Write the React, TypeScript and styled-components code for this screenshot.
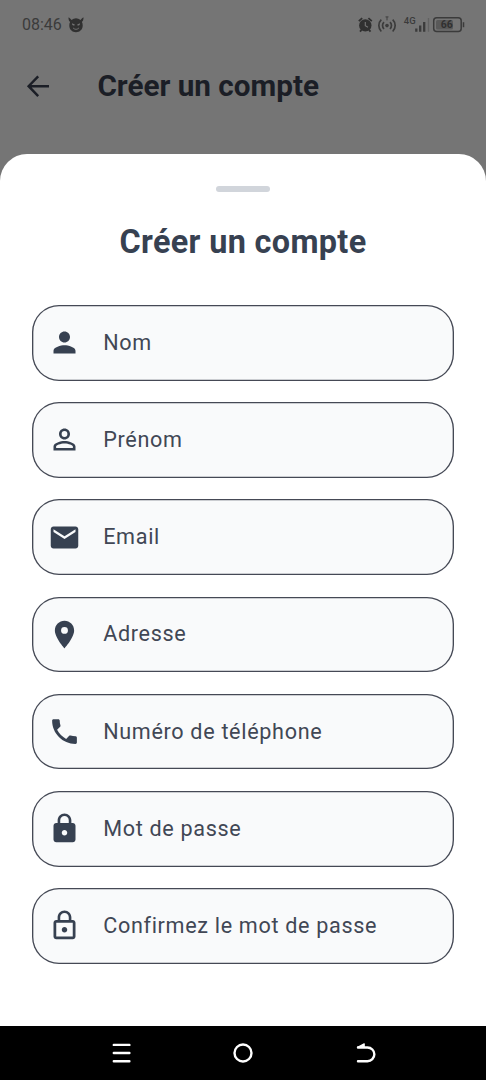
import React from "react";
import styled, { createGlobalStyle } from "styled-components";
import {
  MdEmail,
  MdLocationOn,
  MdLock,
  MdLockOutline,
  MdPerson,
  MdPersonOutline,
  MdPhone,
} from "react-icons/md";
import type { IconType } from "react-icons";

const GlobalStyle = createGlobalStyle`
  * { box-sizing: border-box; }
  body { margin: 0; background: #757575; font-family: Roboto, sans-serif; }
`;

const Screen = styled.main`
  display: flex;
  flex-direction: column;
  width: 486px;
  height: 1080px;
  overflow: hidden;
  background: #757575;
`;

const StatusBar = styled.header`
  display: flex;
  align-items: center;
  justify-content: space-between;
  height: 49px;
  padding: 0 21px 0 22px;
  color: #3b3b3b;
`;

const StatusGroup = styled.div`
  display: flex;
  align-items: center;
`;

const Clock = styled.span`
  margin-right: 6px;
  font-size: 16px;
  line-height: 20px;
`;

const AppBar = styled.div`
  display: flex;
  align-items: center;
  flex: none;
  height: 75px;
  padding-left: 22px;
  color: #1b1e26;
`;

const AppBarTitle = styled.h1`
  margin: 0 0 2px 43px;
  font-size: 29.7px;
  line-height: 38px;
  font-weight: 700;
`;

const Sheet = styled.section`
  display: flex;
  flex-direction: column;
  flex: 1;
  margin-top: 30px;
  padding: 32px 32.4px 0;
  border-radius: 27px 27px 0 0;
  background: #fff;
`;

const Handle = styled.div`
  align-self: center;
  flex: none;
  width: 54px;
  height: 6px;
  border-radius: 3px;
  background: #d1d5db;
`;

const SheetTitle = styled.h2`
  margin: 31px 0 43px;
  font-size: 32.4px;
  line-height: 39px;
  font-weight: 700;
  letter-spacing: 0.34px;
  text-align: center;
  color: #374151;
`;

const Form = styled.form`
  display: flex;
  flex-direction: column;
  gap: 21.6px;
`;

const Field = styled.label`
  display: flex;
  align-items: center;
  height: 75.6px;
  padding-left: 16.1px;
  border-radius: 27px;
  background: #f9fafb;
  box-shadow: inset 0 0 0 1.35px #454955;
  color: #374151;
  font-size: 21.6px;
  letter-spacing: 0.675px;
`;

const FieldLabel = styled.span`
  margin-left: 21.7px;
  line-height: 26px;
  color: #414755;
`;

const NavBar = styled.nav`
  display: flex;
  align-items: center;
  justify-content: space-around;
  flex: none;
  height: 54px;
  padding: 0 60.5px;
  background: #000;
`;

const fields: { label: string; icon: IconType }[] = [
  { label: "Nom", icon: MdPerson },
  { label: "Prénom", icon: MdPersonOutline },
  { label: "Email", icon: MdEmail },
  { label: "Adresse", icon: MdLocationOn },
  { label: "Numéro de téléphone", icon: MdPhone },
  { label: "Mot de passe", icon: MdLock },
  { label: "Confirmez le mot de passe", icon: MdLockOutline },
];

const MascotIcon = () => (
  <svg width="16" height="16" viewBox="0 0 16 16">
    <path d="M.4.6c.1 2.400.8 3.800 1.700 4.500A7 7 0 0 0 1.300 8.500C1.300 12.500 4.300 15.200 8 15.200s6.700-2.700 6.700-6.700a7 7 0 0 0-.8-3.400C14.800 4.400 15.500 3 15.600.6c-1.200.3-2.500 1.400-3 2.500a7.500 7.500 0 0 0-9.200 0C2.900 2 1.600.9.400.6z" fill="#303030" />
    <path d="M4 6.200 6.800 7.500 6.200 8.800 4.300 8zM12 6.200 9.200 7.500l.6 1.300 1.900-.8z" fill="#757575" />
    <path d="M5 10.800c1.700 2 4.300 2 6 0" fill="none" stroke="#757575" strokeWidth="1" />
  </svg>
);

const StatusIcons = () => (
  <svg width="108" height="22" viewBox="0 0.600 108 22" fill="none" stroke="#3b3b3b">
    <circle cx="8.300" cy="12" r="6.200" fill="#303030" stroke="none" />
    <path d="M1.800 7.800 5.200 4.700M11.400 4.700l3.400 3.100M4.500 16.500 3 18.300M12 16.500l1.500 1.800" stroke="#303030" strokeWidth="1.800" />
    <path d="M8.300 8.500v3.800l2.700 1.600" stroke="#757575" strokeWidth="1.100" />
    <circle cx="30" cy="12.200" r="1.800" fill="#3b3b3b" stroke="none" />
    <path d="M27 8.800a4.700 4.700 0 0 0 0 6.800M33 8.800a4.700 4.700 0 0 1 0 6.800M24.300 6.300a8.300 8.300 0 0 0 0 11.800M35.700 6.300a8.300 8.300 0 0 1 0 11.800" strokeWidth="1.700" />
    <path d="M28.500 3.500h3M30 3.500V7" strokeWidth="0.900" />
    <text x="46.800" y="11" fontSize="9.500" fontWeight="500" fill="#3b3b3b" stroke="none" fontFamily="Roboto, sans-serif">4G</text>
    <path d="M59.300 15v3.400M63.200 12v6.400M67.200 8.500v9.900" strokeWidth="2.300" />
    <path d="M71.500 4.600v13.800" stroke="#626262" strokeWidth="1.300" />
    <rect x="76.700" y="4.400" width="27.500" height="13.800" rx="3" strokeWidth="1.500" />
    <path d="M106.500 8.800v5" strokeWidth="1.500" />
    <rect x="79" y="6.600" width="17" height="9.400" rx="1.500" fill="#595959" stroke="none" />
    <text x="83.700" y="15.100" fontSize="10.500" fontWeight="700" fill="#303030" stroke="none" fontFamily="Roboto, sans-serif">66</text>
  </svg>
);

const BackArrow = () => (
  <svg width="32.400" height="32.400" viewBox="0 0 24 24" fill="none" stroke="currentColor" strokeWidth="1.800">
    <path d="M20 12H5.200M12 4.700 4.900 12 12 19.300" />
  </svg>
);

const NavIcon = styled.svg`
  width: 24px;
  height: 24px;
  fill: none;
  stroke: #fff;
  stroke-width: 2.4;
  stroke-linecap: round;
  stroke-linejoin: round;
`;

export default function App() {
  return (
    <>
      <GlobalStyle />
      <Screen>
        <StatusBar>
          <StatusGroup>
            <Clock>08:46</Clock>
            <MascotIcon />
          </StatusGroup>
          <StatusGroup>
            <StatusIcons />
          </StatusGroup>
        </StatusBar>
        <AppBar>
          <BackArrow />
          <AppBarTitle>Créer un compte</AppBarTitle>
        </AppBar>
        <Sheet>
          <Handle />
          <SheetTitle>Créer un compte</SheetTitle>
          <Form>
            {fields.map(({ label, icon: Icon }) => (
              <Field key={label}>
                <Icon size={33} />
                <FieldLabel>{label}</FieldLabel>
              </Field>
            ))}
          </Form>
        </Sheet>
        <NavBar>
          <NavIcon viewBox="0 0 24 24">
            <path d="M4.800 3.900h15.600M4.800 12h15.600M4.800 20.200h15.600" />
          </NavIcon>
          <NavIcon viewBox="0 0 24 24">
            <circle cx="12" cy="12" r="8.500" />
          </NavIcon>
          <NavIcon viewBox="0 0 24 24">
            <path d="M5 6.500H14.500a6.850 6.850 0 0 1 0 13.700H5" />
            <path d="M4.600 6.400 11.200 2.900v3.500z" fill="#fff" strokeWidth="1.200" />
          </NavIcon>
        </NavBar>
      </Screen>
    </>
  );
}
